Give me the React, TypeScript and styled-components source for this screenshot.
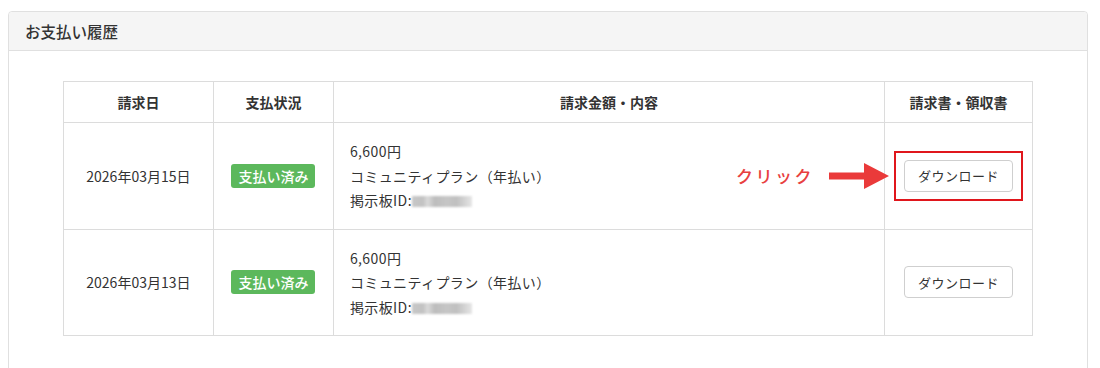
import React from "react";
import styled, { createGlobalStyle } from "styled-components";

const GlobalStyle = createGlobalStyle`
  html, body { margin: 0; padding: 0; background: #fff; }
  body {
    font-family: "Noto Sans CJK JP", "Noto Sans", sans-serif;
    color: #333;
  }
`;

const Page = styled.div`
  padding: 11px 12px 0 8px;
`;

const Card = styled.section`
  border: 1px solid #e0e0e0;
  border-radius: 4px;
  background: #fff;
`;

const CardHeader = styled.header`
  height: 38px;
  display: flex;
  align-items: center;
  padding: 0 16px;
  background: #f5f5f5;
  border-bottom: 1px solid #e0e0e0;
  border-radius: 4px 4px 0 0;
`;

const Title = styled.h2`
  margin: 0;
  font-size: 15.5px;
  font-weight: 500;
  color: #333;
`;

const CardBody = styled.div`
  padding: 30px 0 40px;
`;

const Table = styled.table`
  width: 90%;
  margin: 0 auto;
  table-layout: fixed;
  border-collapse: collapse;
  font-size: 14px;
  color: #333;
`;

const Col = styled.col<{ $w?: number }>`
  width: ${(p) => (p.$w ? `${p.$w}px` : "auto")};
`;

const Th = styled.th`
  box-sizing: border-box;
  border: 1px solid #dcdcdc;
  padding: 10px 8px;
  line-height: 20px;
  font-weight: 700;
  text-align: center;
`;

const Td = styled.td<{ $align?: string }>`
  box-sizing: border-box;
  position: relative;
  border: 1px solid #dcdcdc;
  padding: 16px ${(p) => (p.$align === "left" ? "16px" : "8px")};
  line-height: 24.5px;
  text-align: ${(p) => p.$align || "center"};
  vertical-align: middle;
`;

const Badge = styled.span`
  display: inline-flex;
  align-items: center;
  height: 24px;
  padding: 0 7px;
  background: #5cb85c;
  color: #fff;
  border-radius: 3px;
  font-size: 14px;
  font-weight: 500;
  line-height: 1;
`;

const Line = styled.div`
  letter-spacing: 0.4px;
`;

const Blur = styled.span`
  display: inline-block;
  width: 60px;
  height: 11px;
  vertical-align: -1px;
  background: linear-gradient(
    90deg,
    #c8c8c8 0%,
    #c2c2c2 18%,
    #dadada 26%,
    #bdbdbd 38%,
    #c6c6c6 58%,
    #c0c0c0 74%,
    #d4d4d4 88%,
    #e6e6e6 100%
  );
  filter: blur(1px);
`;

const Highlight = styled.div`
  display: inline-block;
  padding: 7px 8px;
  border: 2px solid #e0161c;
`;

const DownloadButton = styled.button`
  height: 32px;
  padding: 0 13px;
  border: 1px solid #cfcfcf;
  border-radius: 4px;
  background: #fff;
  color: #333;
  font-family: "Noto Sans CJK JP", sans-serif;
  font-size: 13px;
  letter-spacing: 0.5px;
  cursor: pointer;
  vertical-align: middle;
`;

const Annotation = styled.div`
  position: absolute;
  right: -5px;
  top: 50%;
  transform: translateY(-50%);
  display: flex;
  align-items: center;
  gap: 15px;
  pointer-events: none;
`;

const ClickLabel = styled.span`
  color: #e8403f;
  font-size: 17px;
  font-weight: 500;
  letter-spacing: 2.5px;
  line-height: 1;
`;

const Arrow = () => (
  <svg width="60" height="28" viewBox="0 0 60 28">
    <polygon
      points="0,10.5 35,10.5 35,1 60,14 35,27 35,17.5 0,17.5"
      fill="#ea3a3a"
    />
  </svg>
);

type Row = { date: string; highlight?: boolean };

const rows: Row[] = [
  { date: "2026年03月15日", highlight: true },
  { date: "2026年03月13日" },
];

export default function App() {
  return (
    <>
      <GlobalStyle />
      <Page>
        <Card>
          <CardHeader>
            <Title>お支払い履歴</Title>
          </CardHeader>
          <CardBody>
            <Table>
              <colgroup>
                <Col $w={150} />
                <Col $w={120} />
                <Col />
                <Col $w={148} />
              </colgroup>
              <thead>
                <tr>
                  <Th>請求日</Th>
                  <Th>支払状況</Th>
                  <Th>請求金額・内容</Th>
                  <Th>請求書・領収書</Th>
                </tr>
              </thead>
              <tbody>
                {rows.map((r) => (
                  <tr key={r.date}>
                    <Td>{r.date}</Td>
                    <Td>
                      <Badge>支払い済み</Badge>
                    </Td>
                    <Td $align="left">
                      <Line>6,600円</Line>
                      <Line>コミュニティプラン（年払い）</Line>
                      <Line>
                        掲示板ID:<Blur />
                      </Line>
                      {r.highlight && (
                        <Annotation>
                          <ClickLabel>クリック</ClickLabel>
                          <Arrow />
                        </Annotation>
                      )}
                    </Td>
                    <Td>
                      {r.highlight ? (
                        <Highlight>
                          <DownloadButton>ダウンロード</DownloadButton>
                        </Highlight>
                      ) : (
                        <DownloadButton>ダウンロード</DownloadButton>
                      )}
                    </Td>
                  </tr>
                ))}
              </tbody>
            </Table>
          </CardBody>
        </Card>
      </Page>
    </>
  );
}
